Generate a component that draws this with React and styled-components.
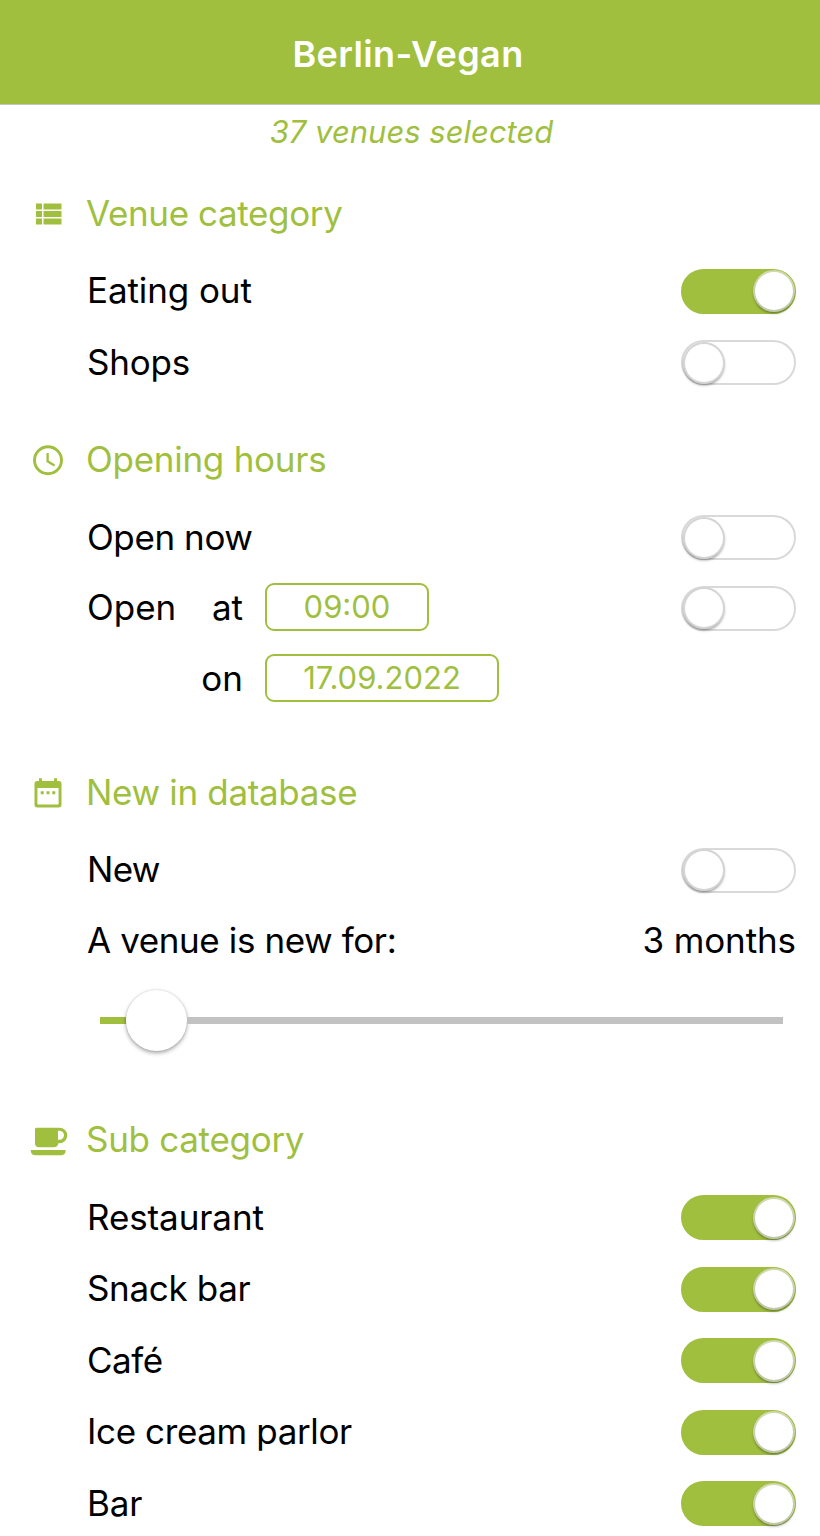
import styled, { createGlobalStyle } from "styled-components";
import { useState } from "react";

const GREEN = "#a0bf3e";

const subCategories = [
    { name: "Restaurant", spacing: -0.1 },
    { name: "Snack bar", spacing: -0.35 },
    { name: "Café", spacing: -0.5 },
    { name: "Ice cream parlor", spacing: -0.38 },
    { name: "Bar", spacing: -0.1 },
];

const ListIcon = () => (
    <svg width="36" height="36" viewBox="0 0 24 24" fill="currentColor">
        <path d="M4 14h4v-4H4v4zm0 5h4v-4H4v4zM4 9h4V5H4v4zm5 5h12v-4H9v4zm0 5h12v-4H9v4zM9 5v4h12V5H9z" />
    </svg>
);

const ClockIcon = () => (
    <svg width="36" height="36" viewBox="0 0 36 36" fill="none" stroke="currentColor">
        <circle cx="18" cy="17.300" r="13.500" strokeWidth="2.900" />
        <path d="M17.600 10v8.300l6.900 4.100" strokeWidth="2.300" />
    </svg>
);

const CalendarIcon = () => (
    <svg width="36" height="36" viewBox="0 0 36 36" fill="currentColor">
        <path
            fillRule="evenodd"
            d="M9 3.200h3V6h12V3.200h3V6h1.800q2.700 0 2.700 2.700v21q0 2.700-2.700 2.700H7.200q-2.700 0-2.700-2.700v-21Q4.500 6 7.200 6H9zM7.400 13v15.500q0 1 1 1h19.200q1 0 1-1V13z"
        />
        <path d="M10.700 16.200h3v3h-3zm5.800 0h3v3h-3zm5.800 0h3v3h-3z" />
    </svg>
);

const CupIcon = () => (
    <svg width="38" height="36" viewBox="0 0 38 36" fill="currentColor">
        <path
            fillRule="evenodd"
            d="M6.500 4.700H29.500a7.800 7.800 0 0 1 0 15.600h-1.200q-.5 4-4.500 4H9q-4 0-4-4V6.200q0-1.500 1.500-1.500zM28 7.700v9h1.500a4.500 4.500 0 0 0 0-9z"
        />
        <path d="M1.300 27h33.800q.6 0 .6.700-.5 4.600-5 4.600h-25q-4.500 0-5-4.600 0-.7.600-.7z" />
    </svg>
);

const Switch = ({ label, defaultOn }) => {
    const [on, setOn] = useState(Boolean(defaultOn));

    return (
        <Track
            type="button"
            role="switch"
            aria-label={label}
            aria-checked={on}
            $on={on}
            onClick={() => setOn(!on)}
        >
            <Knob $on={on} />
        </Track>
    );
};

const SwitchRow = ({ label, spacing, height, defaultOn }) => (
    <Row $height={height}>
        <Label $spacing={spacing}>{label}</Label>
        <Switch label={label} defaultOn={defaultOn} />
    </Row>
);

const SectionHeading = ({ icon, spacing, children }) => (
    <Heading>
        <IconSlot>{icon}</IconSlot>
        <HeadingText $spacing={spacing}>{children}</HeadingText>
    </Heading>
);

const App = () => {
    return (
        <Page>
            <GlobalStyle />
            <Header>
                <Title>Berlin-Vegan</Title>
            </Header>
            <Count>37 venues selected</Count>

            <Section $gap={13.5}>
                <SectionHeading icon={<ListIcon />} spacing={-0.38}>Venue category</SectionHeading>
                <SwitchRow label="Eating out" spacing={-0.1} defaultOn />
                <SwitchRow label="Shops" spacing={-0.2} />
            </Section>

            <Section $gap={20.5}>
                <SectionHeading icon={<ClockIcon />} spacing={-0.26}>Opening hours</SectionHeading>
                <SwitchRow label="Open now" spacing={-0.4} height={71} />
                <Row $height={70}>
                    <TimeFields>
                        <Label>Open</Label>
                        <Preposition>at</Preposition>
                        <Field $width={164}>09:00</Field>
                    </TimeFields>
                    <Switch label="Open at" />
                </Row>
                <Row $height={71.5}>
                    <TimeFields>
                        <span />
                        <Preposition>on</Preposition>
                        <Field $width={234}>17.09.2022</Field>
                    </TimeFields>
                </Row>
            </Section>

            <Section $gap={37}>
                <SectionHeading icon={<CalendarIcon />} spacing={-0.33}>New in database</SectionHeading>
                <SwitchRow label="New" spacing={-0.7} height={71.5} />
                <Row $height={70}>
                    <Label $spacing={-0.4}>A venue is new for:</Label>
                    <Label $spacing={-0.1}>3 months</Label>
                </Row>
                <Slider>
                    <SliderFill />
                    <SliderThumb />
                    <SliderRest />
                </Slider>
            </Section>

            <Section $gap={34.2}>
                <SectionHeading icon={<CupIcon />} spacing={-0.3}>Sub category</SectionHeading>
                {subCategories.map((item) => (
                    <SwitchRow key={item.name} label={item.name} spacing={item.spacing} defaultOn />
                ))}
            </Section>
        </Page>
    );
};

export default App;

const GlobalStyle = createGlobalStyle`
    * { box-sizing: border-box; }
    body {
        margin: 0;
        background: #fff;
        overflow: hidden;
    }
`;

const Page = styled.div`
    width: 820px;
    height: 1536px;
    overflow: hidden;
    color: #000;
    font-family: Inter, "Liberation Sans", sans-serif;
    font-size: 35px;
`;

const Header = styled.header`
    height: 105px;
    display: flex;
    align-items: center;
    justify-content: center;
    padding: 3px 4px 0 0;
    background: ${GREEN};
    border-bottom: 1px solid #c4c4c4;
`;

const Title = styled.h1`
    margin: 0;
    color: #fff;
    font-size: 36px;
    font-weight: 600;
    letter-spacing: 0.4px;
    line-height: 1;
`;

const Count = styled.div`
    height: 54px;
    padding-left: 3px;
    color: ${GREEN};
    font-size: 31px;
    font-style: italic;
    line-height: 53px;
    text-align: center;
`;

const Section = styled.section`
    padding: 0 24px 0 30px;
    margin-top: ${(p) => p.$gap}px;
`;

const Heading = styled.div`
    height: 83px;
    display: flex;
    align-items: center;
    color: ${GREEN};
`;

const IconSlot = styled.span`
    width: 56px;
    height: 36px;
    flex: none;
    svg { display: block; }
`;

const HeadingText = styled.h2`
    margin: 0;
    padding-bottom: 2px;
    font-size: 35px;
    font-weight: 400;
    letter-spacing: ${(p) => p.$spacing || 0}px;
    line-height: 1;
    white-space: nowrap;
`;

const Row = styled.div`
    height: ${(p) => p.$height || 71.5}px;
    display: flex;
    align-items: center;
    justify-content: space-between;
    padding-left: 57px;
`;

const Label = styled.span`
    padding-bottom: 1px;
    letter-spacing: ${(p) => p.$spacing || 0}px;
    line-height: 1;
    white-space: nowrap;
`;

const TimeFields = styled.div`
    display: grid;
    grid-template-columns: 95px 61px auto;
    align-items: center;
`;

const Preposition = styled(Label)`
    text-align: right;
`;

const Field = styled.button`
    width: ${(p) => p.$width}px;
    height: 48px;
    margin: -2px 0 0 22px;
    padding: 0;
    border: 2px solid ${GREEN};
    border-radius: 9px;
    background: #fff;
    color: ${GREEN};
    font-family: inherit;
    font-size: 31px;
    line-height: 44px;
`;

const Track = styled.button`
    width: 115px;
    height: 45px;
    display: flex;
    flex: none;
    align-items: center;
    justify-content: ${(p) => (p.$on ? "flex-end" : "flex-start")};
    padding: 0 1px 0 2px;
    border: 2px solid ${(p) => (p.$on ? GREEN : "#d9d9d9")};
    border-radius: 23px;
    background: ${(p) => (p.$on ? GREEN : "#fff")};
`;

const Knob = styled.span`
    width: 38px;
    height: 38px;
    border-radius: 50%;
    background: #fff;
    box-shadow: 0 0 0 2px ${(p) => (p.$on ? "rgba(225, 228, 215, 0.75)" : "#d4d4d4")},
        0 2px 3px 1px rgba(0, 0, 0, 0.45);
`;

const Slider = styled.div`
    height: 89px;
    display: flex;
    align-items: center;
    padding: 0 13px 0 70px;
`;

const SliderFill = styled.div`
    width: 26px;
    height: 7px;
    background: ${GREEN};
`;

const SliderThumb = styled.div`
    width: 61px;
    height: 61px;
    flex: none;
    border-radius: 50%;
    background: #fff;
    box-shadow: 0 2px 4px rgba(0, 0, 0, 0.35), 0 0 2px rgba(0, 0, 0, 0.15);
`;

const SliderRest = styled.div`
    height: 7px;
    flex: 1;
    background: #c2c2c2;
`;
